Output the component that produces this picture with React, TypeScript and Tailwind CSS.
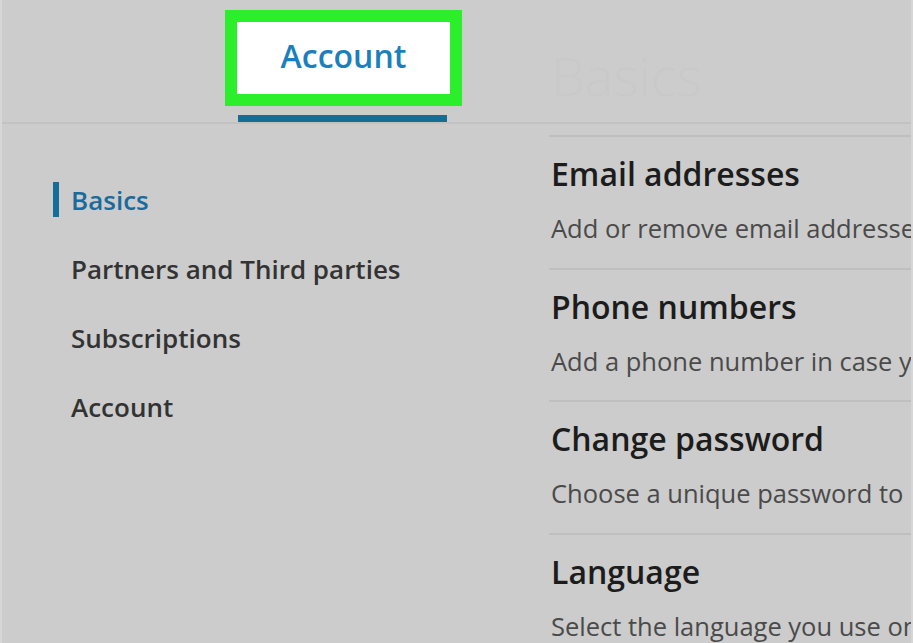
import React from 'react';

const navItems = ['Basics', 'Partners and Third parties', 'Subscriptions', 'Account'];

const sections = [
  { title: 'Email addresses', desc: 'Add or remove email addresses on your account' },
  { title: 'Phone numbers', desc: 'Add a phone number in case you have trouble signing in' },
  { title: 'Change password', desc: 'Choose a unique password to protect your account' },
  { title: 'Language', desc: 'Select the language you use on LinkedIn' },
];

export default function App() {
  return (
    <div className="w-[913px] h-[643px] overflow-hidden bg-[#cccccc] font-['Open_Sans',sans-serif] flex flex-col border-l-2 border-l-[#d6d6d6] border-r-2 border-r-[#d6d6d6]">
      {/* Top tab bar */}
      <div className="h-[124px] shrink-0 flex border-b-2 border-[#c2c2c2]">
        <div className="w-[547px] shrink-0 pl-[223px] pt-[10px] flex flex-col">
          <div className="w-[237px] h-[96px] border-[12px] border-[#2bef2b] bg-white flex items-center justify-center pb-[4px]">
            <span className="text-[32px] font-semibold text-[#1a80bd] leading-none">Account</span>
          </div>
          <div className="ml-[13px] mt-[9px] w-[209px] h-[7px] bg-[#156d96]" />
        </div>
        <div className="pt-[48px] pl-[2px]">
          <span className="text-[54px] font-light text-[#c9c9c9] leading-none">Basics</span>
        </div>
      </div>

      {/* Body */}
      <div className="flex flex-1">
        {/* Left nav */}
        <nav className="w-[547px] shrink-0 pt-[58px] flex flex-col gap-[34px]">
          {navItems.map((item, i) => (
            <div key={item} className="flex items-center h-[35px]">
              <div className={`w-[6px] h-[35px] ml-[51px] ${i === 0 ? 'bg-[#156d9a]' : 'bg-transparent'}`} />
              <span
                className={`ml-[12px] text-[26px] font-semibold leading-none ${
                  i === 0 ? 'text-[#1b6a9c]' : 'text-[#333333]'
                }`}
              >
                {item}
              </span>
            </div>
          ))}
        </nav>

        {/* Right content */}
        <div className="flex-1 pt-[11px] min-w-0">
          {sections.map((s) => (
            <div key={s.title} className="border-t-2 border-[#bfbfbf] pl-[2px] h-[132.5px] pt-[21px] whitespace-nowrap">
              <div className="text-[32px] font-semibold text-[#1c1c1c] leading-none">{s.title}</div>
              <div className="mt-[26px] text-[25.5px] text-[#4a4a4a] leading-none">{s.desc}</div>
            </div>
          ))}
        </div>
      </div>
    </div>
  );
}
